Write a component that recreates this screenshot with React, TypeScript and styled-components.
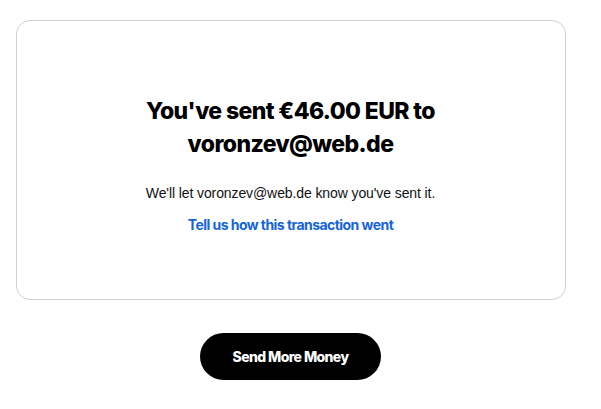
import React from 'react';
import styled, { createGlobalStyle } from 'styled-components';

const GlobalStyle = createGlobalStyle`
  body {
    margin: 0;
    background: #fff;
    font-family: Inter, "Liberation Sans", sans-serif;
    color: #0e0f0c;
  }
`;

const Page = styled.div`
  display: flex;
  flex-direction: column;
  align-items: center;
  padding: 20px 36px 0 16px;
`;

const Card = styled.div`
  box-sizing: border-box;
  width: 550px;
  height: 280px;
  border: 1px solid #cfcfcf;
  border-radius: 14px;
  display: flex;
  flex-direction: column;
  align-items: center;
  padding-top: 74px;
`;

const Title = styled.h1`
  margin: 0;
  font-size: 23px;
  font-weight: 800;
  line-height: 33px;
  letter-spacing: -0.6px;
  text-align: center;
  color: #000;
`;

const Note = styled.p`
  margin: 23px 0 0;
  font-family: "Liberation Sans", Arial, sans-serif;
  font-size: 14px;
  line-height: 18px;
  letter-spacing: -0.1px;
  color: #111;
`;

const FeedbackLink = styled.a`
  margin-top: 14px;
  font-size: 14px;
  font-weight: 700;
  letter-spacing: -0.55px;
  color: #1565d8;
  text-decoration: none;
  cursor: pointer;
`;

const SendButton = styled.button`
  margin-top: 33px;
  width: 181px;
  height: 47px;
  border: none;
  border-radius: 24px;
  background: #000;
  color: #fff;
  font-family: Inter, "Liberation Sans", sans-serif;
  font-size: 14px;
  font-weight: 800;
  letter-spacing: -0.6px;
  cursor: pointer;
`;

export default function App() {
  return (
    <>
      <GlobalStyle />
      <Page>
        <Card>
          <Title>
            You've sent €46.00 EUR to
            <br />
            voronzev@web.de
          </Title>
          <Note>We'll let voronzev@web.de know you've sent it.</Note>
          <FeedbackLink>Tell us how this transaction went</FeedbackLink>
        </Card>
        <SendButton>Send More Money</SendButton>
      </Page>
    </>
  );
}
